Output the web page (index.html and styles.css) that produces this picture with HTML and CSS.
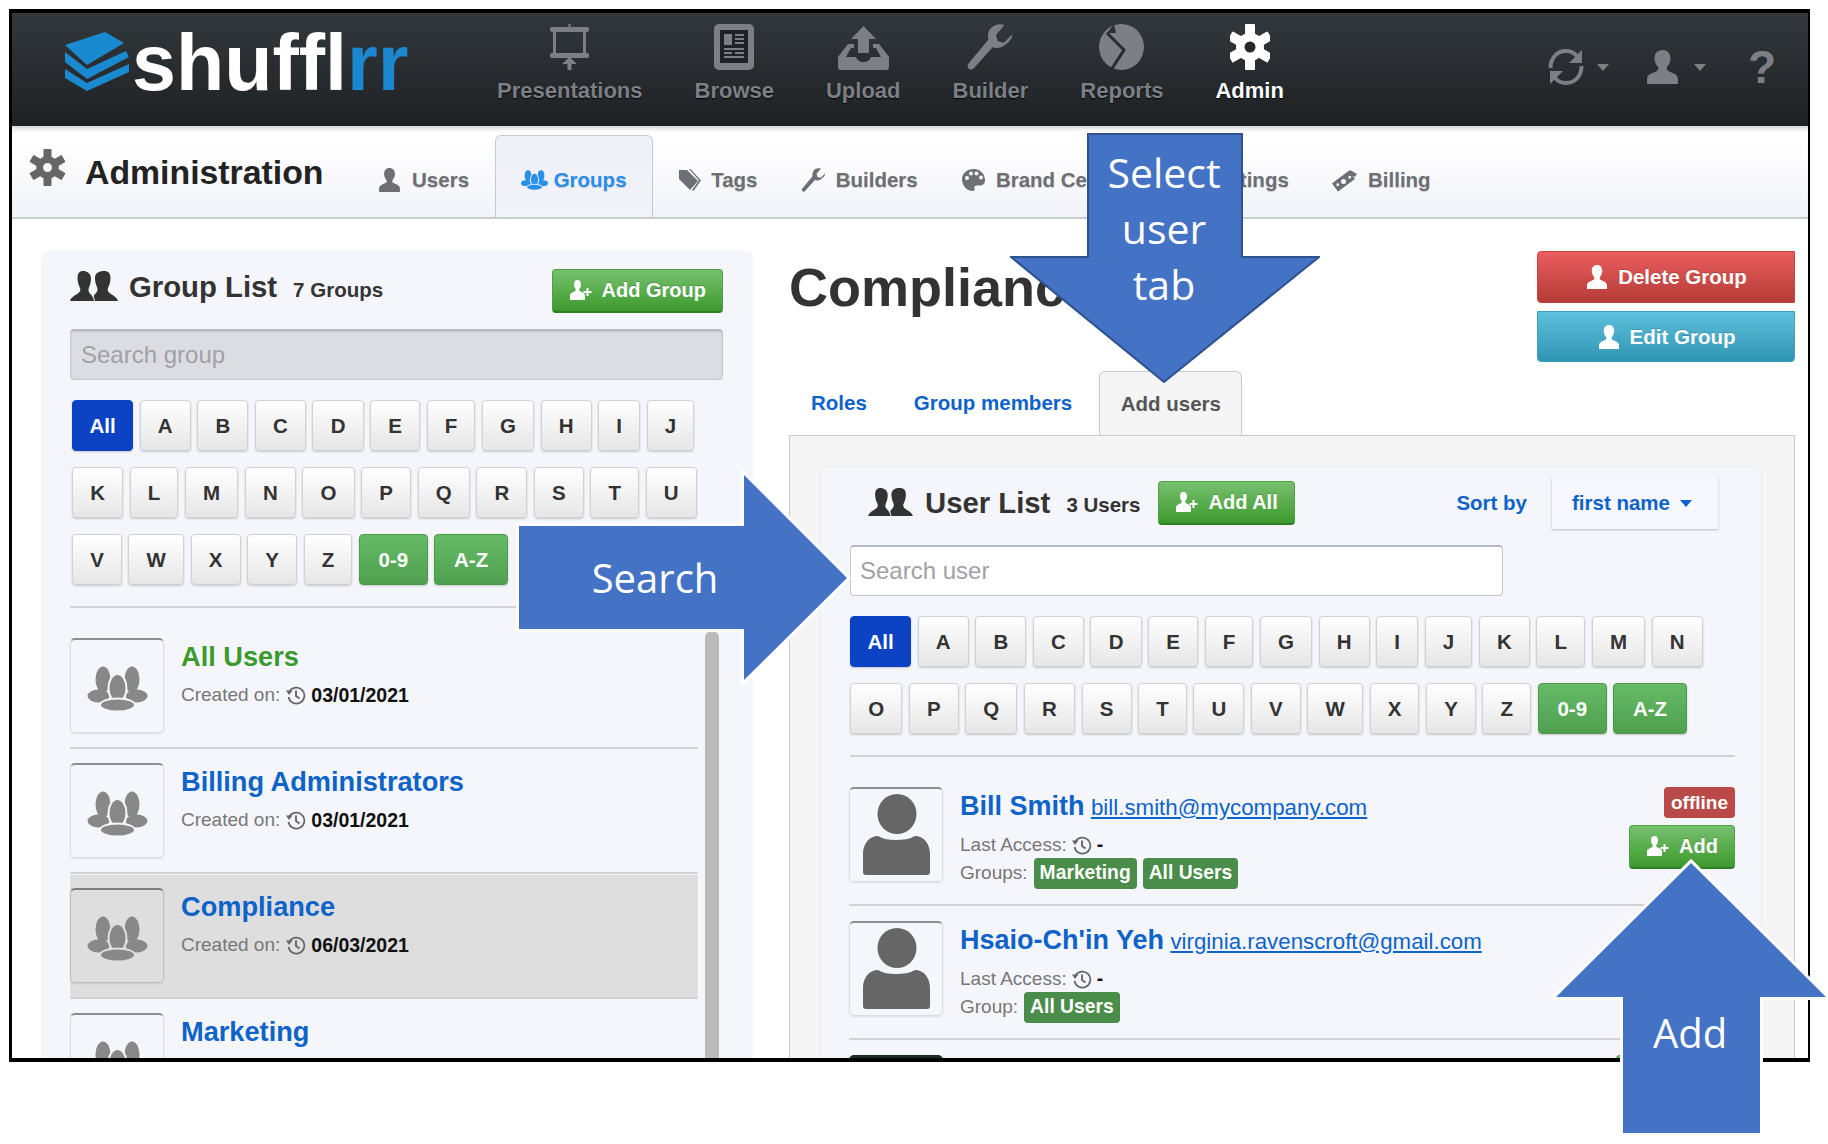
FILE: index.html
```html
<!DOCTYPE html>
<html lang="en">
<head>
  <meta charset="UTF-8">
  <meta name="viewport" content="width=device-width, initial-scale=1.0">
  <title>Shufflrr Administration</title>
  <link rel="stylesheet" href="styles.css">
</head>
<body>
  <!-- icon set -->
  <svg class="sprite" xmlns="http://www.w3.org/2000/svg">
    <symbol id="i-user" viewBox="0 0 24 24" preserveAspectRatio="none"><path d="M12 0C8.600 0 6.800 2.600 6.800 6c0 2.400 1 4.400 2.200 5.900.6.900.4 2.100-.5 2.800C6.300 16.200 2 16.900 2 20.200V24h20v-3.800c0-3.300-4.300-4-6.500-5.500-.9-.7-1.100-1.900-.5-2.800 1.200-1.500 2.200-3.500 2.200-5.900C17.200 2.600 15.400 0 12 0z"/></symbol>
    <symbol id="i-pair" viewBox="0 0 48 30"><path d="M13 0C9.500 0 7.500 2.500 7.500 7c0 4 1.300 7.500 2.500 10 .8 2 .2 3.500-1.500 5C6 24 1 26 0 30h24c-.3-3-2-5.500-4-7.500-1.500-1.500-2-3.500-1-6 1.200-2.500 2-5.500 2-9C21 2.500 17 0 13 0z"/><path d="M34 0c-5 0-9 2-9 7 0 3.500.8 6.500 2 9 1 2.500.5 4.500-1 6-1 1-1.800 2-2.300 3L25 30h23c-1-4-6-6-8.500-8-1.700-1.500-2.300-3-1.500-5 1.200-2.500 2.500-6 2.500-10 0-4.500-2-7-6.500-7z"/></symbol>
    <symbol id="i-users" viewBox="0 0 60 46"><ellipse cx="15.500" cy="13.500" rx="7.500" ry="13"/><ellipse cx="44.500" cy="13.500" rx="7.500" ry="13"/><ellipse cx="11" cy="30" rx="11" ry="6.500"/><ellipse cx="49" cy="30" rx="11" ry="6.500"/><ellipse class="front" cx="30" cy="22" rx="9" ry="14"/><ellipse class="front" cx="30" cy="39" rx="17.500" ry="6.500"/></symbol>
    <symbol id="i-add" viewBox="0 0 24 22"><path d="M8.500 0C6 0 5 2 5 4.800c0 1.700.7 3 1.500 4 .5.700.4 1.700-.3 2.200C4.500 12.200 1 12.800 1 15.500V20h15v-4.500c0-2.700-3.500-3.300-5.200-4.500-.7-.5-.8-1.500-.3-2.200.8-1 1.500-2.300 1.500-4C12 2 11 0 8.500 0z"/><path d="M17.500 8h2v3h3v2h-3v3h-2v-3h-3v-2h3z"/></symbol>
    <symbol id="i-gear" viewBox="0 0 40 46"><g><rect x="15" y="0" width="10" height="46" rx="1"/><rect x="15" y="0" width="10" height="46" rx="1" transform="rotate(60 20 23)"/><rect x="15" y="0" width="10" height="46" rx="1" transform="rotate(-60 20 23)"/></g><circle cx="20" cy="23" r="14"/><circle class="hole" cx="20" cy="23" r="5.500"/></symbol>
    <symbol id="i-wrench" viewBox="0 0 24 24"><path d="M23.500 5.500l-4.300 4.300-3.200-.9-.9-3.200L19.500.5c-2.800-.9-5.700 0-7.300 2-1.300 1.600-1.600 3.600-1 5.600L1 20.300c-.9 1-.9 2.300 0 3 .9.700 2 .5 2.800-.5l9.600-10.700c2.100.8 4.600.4 6.400-1.100 2.300-1.800 4.100-3.800 3.700-5.500z"/></symbol>
    <symbol id="i-tags" viewBox="0 0 24 24"><path d="M2 2h8l11 11-8 9L2 11z"/><path class="cut" d="M12 1h1.500L24 12.500 16.500 23 15 22l7-9.500z"/></symbol>
    <symbol id="i-palette" viewBox="0 0 24 24"><path d="M12 1C5.500 1 .5 5.500.5 11.500S5.500 23 11 23c2 0 2.500-1.200 2-2.500-.6-1.500.2-3 2-3h3.500c3 0 5-2.200 5-5C23.500 5.500 18.500 1 12 1zM5.500 12a2 2 0 1 1 0-4 2 2 0 0 1 0 4zm4-4.500a2 2 0 1 1 0-4 2 2 0 0 1 0 4zm5.500 0a2 2 0 1 1 0-4 2 2 0 0 1 0 4zm4.500 4a2 2 0 1 1 0-4 2 2 0 0 1 0 4z" fill-rule="evenodd"/></symbol>
    <symbol id="i-billing" viewBox="0 0 26 24"><path d="M1 15L18 2l7 4-2 3-1.500-1L5 21l3 1-2 1z"/><path d="M0 15.500L17 3l6 8L6 23.500z"/><circle class="hole" cx="11.500" cy="13.500" r="2.500"/><rect class="hole" x="4.500" y="15.500" width="2.500" height="2.500"/><rect class="hole" x="16.500" y="8" width="2.500" height="2.500"/></symbol>
    <symbol id="i-history" viewBox="0 0 20 20"><path d="M3.500 6.500A8 8 0 1 1 2.500 12" fill="none" stroke="currentColor" stroke-width="1.700"/><path d="M0 5.500h6.500L3 10z"/><path d="M10 5.500V11l3.500 2.500" fill="none" stroke="currentColor" stroke-width="1.900"/></symbol>
  </svg>

  <div class="page">
    <div class="frame">
      <header class="topbar">
        <div class="logo">
          <svg class="logo-mark" viewBox="0 0 65 59"><path d="M1 13L41 0l19 11-37 22z"/><path d="M1 20l22 17 39-18 3 6-42 22L1 30z"/><path d="M1 37l22 14 42-19v8L23 59 1 46z"/></svg>
          <span class="logo-text">shuffl<span class="logo-rr">rr</span></span>
        </div>
        <nav class="mainnav">
          <a class="nav-item">
            <svg class="nav-icon" width="39" height="46" viewBox="0 0 39 46"><rect x="18.500" width="2" height="4"/><rect x="0" y="3" width="39" height="5" rx="2"/><rect x="4.500" y="6" width="30" height="25" fill="none" stroke="currentColor" stroke-width="3"/><rect x="0" y="29" width="39" height="5" rx="2"/><path d="M19.500 33l-7.500 7h5.500v6h4v-6H27z"/></svg>
            <span>Presentations</span>
          </a>
          <a class="nav-item">
            <svg class="nav-icon" width="40" height="46" viewBox="0 0 40 46"><rect width="40" height="46" rx="5"/><rect class="nav-dark" x="6" y="6" width="28" height="33"/><path d="M10 10h8v11h-8zM21 10h9v2h-9zM21 14h9v2h-9zM21 18h9v2h-9zM10 24h20v2H10zM10 28h8v2h-8zM21 28h9v2h-9zM10 32h20v2H10z"/></svg>
            <span>Browse</span>
          </a>
          <a class="nav-item">
            <svg class="nav-icon" width="51" height="46" viewBox="0 0 51 46"><path d="M25.500 2L38 15h-7v14H20V15h-7z"/><path d="M10 20h6v4h-3l-5 9h10c1 3 4 5 7.500 5s6.500-2 7.500-5h10l-5-9h-3v-4h6l10 13v10a3 3 0 0 1-3 3H3a3 3 0 0 1-3-3V33z"/></svg>
            <span>Upload</span>
          </a>
          <a class="nav-item">
            <svg class="nav-icon" width="46" height="46"><use href="#i-wrench"/></svg>
            <span>Builder</span>
          </a>
          <a class="nav-item">
            <svg class="nav-icon" width="45" height="46" viewBox="0 0 45 46"><ellipse cx="22.500" cy="23" rx="22.500" ry="23"/><path d="M8 9l17 17L12 46" fill="none" class="pie-cut" stroke-width="3"/><path d="M15 0l2 9-9 0z" class="pie-notch"/></svg>
            <span>Reports</span>
          </a>
          <a class="nav-item nav-active">
            <svg class="nav-icon" width="40" height="46"><use href="#i-gear"/></svg>
            <span>Admin</span>
          </a>
        </nav>
        <div class="tools">
          <svg class="tool-icon" width="36" height="38" viewBox="0 0 36 38"><path d="M2.500 20C2.500 10 9 3 18 3c4.500 0 8 1.500 11 5M33.500 18c0 10-6.500 17-15.500 17-4.500 0-8-1.500-11-5" fill="none" stroke="currentColor" stroke-width="4"/><path d="M34 2v13H21zM2 36V23h13z"/></svg>
          <span class="tool-caret"></span>
          <svg class="tool-icon tool-user" width="37" height="34"><use href="#i-user"/></svg>
          <span class="tool-caret"></span>
          <span class="tool-help">?</span>
        </div>
      </header>

      <div class="subbar">
        <svg class="sub-gear" width="37" height="37"><use href="#i-gear"/></svg>
        <h2 class="sub-title">Administration</h2>
        <ul class="subnav">
          <li class="sub-item"><svg class="sub-icon" width="25" height="24"><use href="#i-user"/></svg>Users</li>
          <li class="sub-item sub-active"><svg class="sub-icon" width="27" height="24"><use href="#i-users"/></svg>Groups</li>
          <li class="sub-item"><svg class="sub-icon" width="24" height="24"><use href="#i-tags"/></svg>Tags</li>
          <li class="sub-item"><svg class="sub-icon" width="25" height="24"><use href="#i-wrench"/></svg>Builders</li>
          <li class="sub-item"><svg class="sub-icon" width="25" height="24"><use href="#i-palette"/></svg>Brand Center</li>
          <li class="sub-item"><svg class="sub-icon" width="29" height="24"><use href="#i-gear"/></svg>Settings</li>
          <li class="sub-item"><svg class="sub-icon" width="26" height="24"><use href="#i-billing"/></svg>Billing</li>
        </ul>
      </div>

      <main class="content">
        <section class="group-panel">
          <div class="panel-head">
            <svg class="pair-icon" width="48" height="30"><use href="#i-pair"/></svg>
            <h3 class="panel-title">Group List</h3>
            <span class="panel-count">7 Groups</span>
            <button class="btn btn-green btn-push"><svg width="24" height="22"><use href="#i-add"/></svg>Add Group</button>
          </div>
          <input class="search search-off" type="text" placeholder="Search group">
          <div class="alpha alpha-left">
            <a class="key key-on">All</a><a class="key">A</a><a class="key">B</a><a class="key">C</a><a class="key">D</a><a class="key">E</a><a class="key">F</a><a class="key">G</a><a class="key">H</a><a class="key">I</a><a class="key">J</a><a class="key">K</a><a class="key">L</a><a class="key">M</a><a class="key">N</a><a class="key">O</a><a class="key">P</a><a class="key">Q</a><a class="key">R</a><a class="key">S</a><a class="key">T</a><a class="key">U</a><a class="key">V</a><a class="key">W</a><a class="key">X</a><a class="key">Y</a><a class="key">Z</a><a class="key key-green">0-9</a><a class="key key-green">A-Z</a>
          </div>
          <hr class="rule">
          <div class="list-wrap">
            <ul class="group-list">
              <li class="group-row">
                <div class="thumb"><svg class="thumb-users" width="61" height="46"><use href="#i-users"/></svg></div>
                <div class="group-info">
                  <a class="group-name name-green">All Users</a>
                  <div class="meta">Created on: <svg class="clock" width="20" height="20"><use href="#i-history"/></svg> <b>03/01/2021</b></div>
                </div>
              </li>
              <li class="group-row">
                <div class="thumb"><svg class="thumb-users" width="61" height="46"><use href="#i-users"/></svg></div>
                <div class="group-info">
                  <a class="group-name">Billing Administrators</a>
                  <div class="meta">Created on: <svg class="clock" width="20" height="20"><use href="#i-history"/></svg> <b>03/01/2021</b></div>
                </div>
              </li>
              <li class="group-row group-selected">
                <div class="thumb"><svg class="thumb-users" width="61" height="46"><use href="#i-users"/></svg></div>
                <div class="group-info">
                  <a class="group-name">Compliance</a>
                  <div class="meta">Created on: <svg class="clock" width="20" height="20"><use href="#i-history"/></svg> <b>06/03/2021</b></div>
                </div>
              </li>
              <li class="group-row">
                <div class="thumb"><svg class="thumb-users" width="61" height="46"><use href="#i-users"/></svg></div>
                <div class="group-info">
                  <a class="group-name">Marketing</a>
                </div>
              </li>
            </ul>
            <div class="scrollbar"></div>
          </div>
        </section>

        <section class="detail">
          <div class="detail-head">
            <h1 class="detail-title">Compliance</h1>
            <div class="detail-actions">
              <button class="btn btn-wide btn-red"><svg width="24" height="24"><use href="#i-user"/></svg>Delete Group</button>
              <button class="btn btn-wide btn-blue"><svg width="24" height="24"><use href="#i-user"/></svg>Edit Group</button>
            </div>
          </div>
          <div class="tabs">
            <a class="tab">Roles</a>
            <a class="tab">Group members</a>
            <a class="tab tab-active">Add users</a>
          </div>
          <div class="pane">
            <div class="user-panel">
              <div class="user-head">
                <svg class="pair-icon" width="47" height="28"><use href="#i-pair"/></svg>
                <h3 class="panel-title">User List</h3>
                <span class="panel-count">3 Users</span>
                <button class="btn btn-green"><svg width="24" height="22"><use href="#i-add"/></svg>Add All</button>
                <span class="sort-label">Sort by</span>
                <div class="sort-box">first name<span class="sort-caret"></span></div>
              </div>
              <input class="search search-user" type="text" placeholder="Search user">
              <div class="alpha alpha-users">
                <a class="key key-on">All</a><a class="key">A</a><a class="key">B</a><a class="key">C</a><a class="key">D</a><a class="key">E</a><a class="key">F</a><a class="key">G</a><a class="key">H</a><a class="key">I</a><a class="key">J</a><a class="key">K</a><a class="key">L</a><a class="key">M</a><a class="key">N</a><a class="key">O</a><a class="key">P</a><a class="key">Q</a><a class="key">R</a><a class="key">S</a><a class="key">T</a><a class="key">U</a><a class="key">V</a><a class="key">W</a><a class="key">X</a><a class="key">Y</a><a class="key">Z</a><a class="key key-green">0-9</a><a class="key key-green">A-Z</a>
              </div>
              <hr class="rule">
              <ul class="user-list">
                <li class="user-row">
                  <div class="thumb thumb-person"><svg width="67" height="81" viewBox="0 0 67 81"><ellipse cx="34" cy="20" rx="19.500" ry="20"/><path d="M0 78V60c0-10 6-18 15-18 5 3 11 4 18 4s14-1 19-4c9 0 15 8 15 18v18c0 2-1 3-3 3H3c-2 0-3-1-3-3z"/></svg></div>
                  <div class="user-info">
                    <div class="user-line"><a class="user-name">Bill Smith</a> <a class="user-mail">bill.smith@mycompany.com</a></div>
                    <div class="user-access">Last Access: <svg class="clock" width="20" height="20"><use href="#i-history"/></svg> <b>-</b></div>
                    <div class="user-groups">Groups: <span class="tag">Marketing</span><span class="tag">All Users</span></div>
                  </div>
                  <div class="user-side">
                    <span class="status">offline</span>
                    <button class="btn btn-green"><svg width="24" height="22"><use href="#i-add"/></svg>Add</button>
                  </div>
                </li>
                <li class="user-row">
                  <div class="thumb thumb-person"><svg width="67" height="81" viewBox="0 0 67 81"><ellipse cx="34" cy="20" rx="19.500" ry="20"/><path d="M0 78V60c0-10 6-18 15-18 5 3 11 4 18 4s14-1 19-4c9 0 15 8 15 18v18c0 2-1 3-3 3H3c-2 0-3-1-3-3z"/></svg></div>
                  <div class="user-info">
                    <div class="user-line"><a class="user-name">Hsaio-Ch'in Yeh</a> <a class="user-mail">virginia.ravenscroft@gmail.com</a></div>
                    <div class="user-access">Last Access: <svg class="clock" width="20" height="20"><use href="#i-history"/></svg> <b>-</b></div>
                    <div class="user-groups">Group: <span class="tag">All Users</span></div>
                  </div>
                  <div class="user-side">
                    <span class="status">offline</span>
                    <button class="btn btn-green"><svg width="24" height="22"><use href="#i-add"/></svg>Add</button>
                  </div>
                </li>
                <li class="user-row">
                  <div class="thumb thumb-photo"></div>
                  <div class="user-side">
                    <button class="btn btn-green btn-long"></button>
                  </div>
                </li>
              </ul>
            </div>
          </div>
        </section>
      </main>
    </div>

    <!-- slide annotations on top of the screenshot -->
    <div class="callout callout-tab">
      <svg width="310" height="250" viewBox="0 0 310 250"><polygon points="78,1 232,1 232,124 309,124 154,249 1,124 78,124"/></svg>
      <span class="callout-text">Select<br>user<br>tab</span>
    </div>
    <div class="callout callout-search">
      <svg width="336" height="215" viewBox="0 0 336 215"><polygon points="4,56 229,56 229,5 332,108 229,210 229,159 4,159"/></svg>
      <span class="callout-text">Search</span>
    </div>
    <div class="callout callout-add">
      <svg width="276" height="278" viewBox="0 0 276 278"><polygon points="139,4 274,138 208,138 208,274 71,274 71,138 4,138"/></svg>
      <span class="callout-text">Add</span>
    </div>
  </div>
</body>
</html>
```

FILE: styles.css
```css
* {
  box-sizing: border-box;
}

html, body {
  margin: 0;
  padding: 0;
  overflow: hidden;
  background: #fff;
}

body {
  font-family: "Liberation Sans", Arial, sans-serif;
  color: #333;
}

.sprite {
  display: none;
}

a {
  cursor: pointer;
}

svg {
  fill: currentColor;
  flex-shrink: 0;
}

.page {
  position: relative;
  width: 1828px;
  height: 1144px;
  padding: 9px 0 0 9px;
  overflow: hidden;
}

.frame {
  width: 1801px;
  height: 1053px;
  border-style: solid;
  border-color: #000;
  border-width: 4px 2px 4px 3px;
  display: flex;
  flex-direction: column;
  overflow: hidden;
  background: #fff;
}

/* top bar */
.topbar {
  flex: 0 0 113px;
  display: flex;
  align-items: flex-start;
  padding: 11px 37px 0 52px;
  background: linear-gradient(#33383c, #1e2124);
}

.logo {
  width: 343px;
  margin-top: 8px;
  display: flex;
  align-items: flex-start;
  gap: 3px;
  color: #1a8ad0;
}

.logo-mark {
  width: 65px;
  height: 59px;
}

.logo-text {
  margin-top: 1px;
  font-weight: 700;
  font-size: 79px;
  line-height: 60px;
  color: #fff;
}

.logo-rr {
  color: #1a87cf;
}

.mainnav {
  display: flex;
  margin-left: 64px;
}

.nav-item {
  display: flex;
  flex-direction: column;
  align-items: center;
  gap: 8px;
  padding: 0 26px;
  color: #7c8086;
  font-size: 22px;
  font-weight: 700;
  line-height: 26px;
  text-shadow: 0 1px 1px #000;
}

.nav-icon {
  height: 46px;
  color: #7c8086;
}

.nav-dark {
  fill: #202326;
}

.pie-cut {
  stroke: #282b2f;
}

.pie-notch {
  fill: #2d3135;
}

.nav-active, .nav-active .nav-icon {
  color: #fff;
}

.hole {
  fill: var(--hole, #25282b);
}

.tools {
  margin-left: auto;
  margin-top: 24px;
  display: flex;
  align-items: center;
  color: #7c8086;
}

.tool-caret {
  width: 0;
  height: 0;
  margin: 0 35px 0 13px;
  border-left: 6px solid transparent;
  border-right: 6px solid transparent;
  border-top: 7px solid #7c8086;
}

.tool-user + .tool-caret {
  margin-right: 42px;
}

.tool-help {
  width: 23px;
  font-size: 46px;
  font-weight: 700;
  line-height: 37px;
}

/* administration bar */
.subbar {
  flex: 0 0 91px;
  display: flex;
  padding-left: 17px;
  background: linear-gradient(#fff 20%, #f2f3f9);
  border-bottom: 2px solid #c9cbd3;
  box-shadow: inset 0 6px 6px -5px rgba(0, 0, 0, .25);
  --hole: #f8f8fc;
}

.sub-gear {
  margin-top: 23px;
  color: #666;
}

.sub-title {
  margin: 26px 0 0 19px;
  font-size: 33.800px;
  line-height: 40px;
  color: #222;
}

.subnav {
  display: flex;
  list-style: none;
  margin: 9px 0 0 32px;
  padding: 0;
}

.sub-item {
  display: flex;
  align-items: center;
  gap: 10px;
  padding: 7px 21.600px 0;
  font-size: 20.500px;
  font-weight: 700;
  color: #6d6f73;
  text-shadow: 0 1px 1px rgba(0, 0, 0, .18);
}

.sub-icon {
  color: #6d6f73;
}

.sub-active {
  margin: 0 3px 0 4px;
  padding: 7px 25px 0;
  gap: 6px;
  height: 82px;
  color: #2a8fe8;
  background: linear-gradient(#eef0f7, #f3f4fa);
  border: 1px solid #c5c8d5;
  border-bottom: 0;
  border-radius: 6px 6px 0 0;
}

.sub-active .sub-icon {
  color: #2a8fe8;
  --thumb-bg: #f1f2f9;
}

/* main area */
.content {
  flex: 1;
  min-height: 0;
  display: flex;
  gap: 37px;
  padding: 0 13px 0 30px;
  overflow: hidden;
}

.group-panel {
  flex: 0 0 710px;
  margin-top: 33px;
  padding: 17px 29px 0 28px;
  background: #f5f6fb;
  border-radius: 6px 6px 0 0;
  box-shadow: 0 0 2px rgba(0, 0, 0, .12);
  overflow: hidden;
}

.panel-head {
  display: flex;
  align-items: center;
}

.panel-title {
  margin: -8px 0 0 11px;
  font-size: 29.300px;
  line-height: 44px;
  color: #333;
}

.panel-count {
  margin: -2px 0 0 16px;
  font-size: 20.500px;
  font-weight: 700;
  color: #333;
}

.pair-icon {
  margin-top: -10px;
  color: #333;
}

/* buttons */
.btn {
  display: inline-flex;
  align-items: center;
  justify-content: center;
  gap: 9px;
  height: 44px;
  padding: 0 16px;
  border: 1px solid transparent;
  border-radius: 4px;
  font-family: inherit;
  font-size: 20px;
  font-weight: 700;
  color: #fff;
  text-shadow: 0 -1px 0 rgba(0, 0, 0, .2);
}

.btn svg {
  color: #fff;
}

.btn-green {
  background: linear-gradient(#77c070, #3d9a2c);
  border-color: #4fa044 #4fa044 #2f7d25;
  border-bottom-width: 2px;
}

.btn-push {
  margin-left: auto;
}

.btn-long {
  width: 119px;
}

.btn-wide {
  width: 258px;
  height: 52px;
  font-size: 20.500px;
  border-radius: 4px 0 0 4px;
}

.btn-red {
  background: linear-gradient(#ea5e5e, #b43b37);
  border-color: #c9423f;
}

.btn-blue {
  height: 51px;
  border-radius: 0 0 4px 4px;
  background: linear-gradient(#5ec2de, #2f93b2);
  border-color: #3d9fbd;
}

/* search boxes */
.search {
  display: block;
  height: 51px;
  margin-top: 16px;
  padding: 0 9px;
  border: 1px solid #c3c6d0;
  border-top: 2px solid #b6b9c4;
  border-radius: 4px;
  font-family: inherit;
  font-size: 24px;
  background: #fff;
}

.search::placeholder {
  color: #9fa1a6;
}

.search-off {
  width: 653px;
  padding-left: 10px;
  background: #dcdde2;
  box-shadow: inset 0 1px 2px rgba(0, 0, 0, .1);
}

.search-user {
  width: 653px;
  margin-top: 16px;
}

/* alphabet filter */
.alpha {
  display: flex;
  flex-wrap: wrap;
  gap: 16px 6.500px;
  margin-top: 20px;
}

.alpha-left {
  margin-left: 2px;
}

.key {
  height: 51px;
  padding: 0 17.150px;
  display: flex;
  align-items: center;
  border: 1px solid #d2d2d2;
  border-radius: 4px;
  background: linear-gradient(#fff, #e6e6e6);
  box-shadow: 0 1px 2px rgba(0, 0, 0, .2);
  font-size: 20.500px;
  font-weight: 700;
  color: #333;
}

.key-on {
  padding: 0 16.500px;
  background: #0b43c4;
  border-color: #0b43c4;
  color: #fff;
}

.key-green {
  padding: 0 18.700px;
  background: linear-gradient(#66bb66, #4f9f4f);
  border-color: #4b994b;
  color: #fff;
}

.rule {
  margin: 21px 0 0;
  border: 0;
  border-top: 2px solid #d0d2d8;
}

/* group list */
.list-wrap {
  display: flex;
  gap: 7px;
  margin-top: 17px;
}

.group-list {
  flex: 0 0 628px;
  list-style: none;
  margin: 0;
  padding: 0;
}

.group-row {
  display: flex;
  gap: 17px;
  height: 124px;
  margin-bottom: 1px;
  padding-top: 13px;
  border-bottom: 2px solid #d0d2d8;
}

.group-selected {
  background: #dedede;
  --thumb-bg: #dedede;
}

.thumb {
  flex: 0 0 94px;
  height: 95px;
  display: flex;
  align-items: center;
  justify-content: center;
  border: 1px solid #dcdde2;
  border-top: 2px solid #8e8f92;
  border-radius: 5px;
  box-shadow: 0 1px 2px rgba(0, 0, 0, .1);
}

.thumb-users {
  color: #888;
  margin-top: 6px;
}

.front {
  stroke: var(--thumb-bg, #f5f6fb);
  stroke-width: 2;
}

.group-selected .thumb {
  border-color: #bdbdbd;
  border-top-color: #7e7e7e;
}

.group-info {
  padding-top: 3px;
}

.group-name {
  display: block;
  font-size: 27.200px;
  font-weight: 700;
  line-height: 32px;
  color: #0e63c9;
}

.name-green {
  color: #3a9a2e;
}

.meta {
  display: flex;
  align-items: center;
  gap: 5.500px;
  margin-top: 7px;
  font-size: 19px;
  line-height: 30px;
  color: #777;
}

.meta b, .user-access b {
  font-size: 19.500px;
  color: #111;
}

.clock {
  color: #666;
}

.scrollbar {
  flex: 0 0 14px;
  margin-top: 7px;
  border-radius: 5px 5px 0 0;
  background: #bbb;
}

/* right column */
.detail {
  flex: 1;
  min-width: 0;
  display: flex;
  flex-direction: column;
}

.detail-head {
  flex: 0 0 120px;
  margin-top: 32px;
  display: flex;
  justify-content: space-between;
}

.detail-title {
  margin: 6px 0 0 0;
  font-size: 54px;
  line-height: 60px;
  color: #333;
}

.detail-actions {
  display: flex;
  flex-direction: column;
  gap: 8px;
}

.tabs {
  flex: 0 0 63px;
  display: flex;
  gap: 3px;
}

.tab {
  padding: 0 22px;
  display: flex;
  align-items: center;
  font-size: 20.500px;
  font-weight: 700;
  color: #0e63c9;
}

.tab-active {
  margin-left: 2px;
  padding: 0 20.500px;
  color: #555;
  background: #f5f5f5;
  border: 1px solid #c5c8d5;
  border-bottom: 0;
  border-radius: 6px 6px 0 0;
  height: 64px;
  position: relative;
}

.pane {
  flex: 1;
  min-height: 0;
  padding: 31px 33px 0 31px;
  background: #f5f5f5;
  border: 1px solid #c5c8d5;
  border-bottom: 0;
  overflow: hidden;
}

.user-panel {
  height: 100%;
  padding: 10px 26px 0 29px;
  background: #f5f6fb;
  border-radius: 6px 6px 0 0;
  box-shadow: 0 0 2px rgba(0, 0, 0, .12);
}

.user-head {
  display: flex;
  align-items: center;
  padding-left: 17px;
  height: 52px;
}

.user-head .pair-icon {
  margin-top: -2px;
}

.user-head .panel-title {
  margin-top: 0;
}

.user-head .panel-count {
  margin-top: 4px;
  margin-right: 18px;
}

.sort-label {
  margin-left: auto;
  font-size: 20.500px;
  font-weight: 700;
  color: #0e63c9;
}

.sort-box {
  display: flex;
  align-items: center;
  gap: 10px;
  width: 166px;
  height: 52px;
  margin: 0 17px 0 25px;
  padding-left: 20px;
  background: #f6f7ff;
  box-shadow: 0 1px 2px rgba(0, 0, 0, .25);
  font-size: 20.500px;
  font-weight: 700;
  color: #0e63c9;
}

.sort-caret {
  width: 0;
  height: 0;
  border-left: 6.500px solid transparent;
  border-right: 6.500px solid transparent;
  border-top: 7px solid #0e63c9;
}

/* users */
.user-list {
  list-style: none;
  margin: 0 0 0 -1px;
  padding: 30px 0 0;
}

.user-row {
  display: flex;
  gap: 17px;
  padding-bottom: 16px;
  margin-bottom: 15px;
  border-bottom: 2px solid #d0d2d8;
}

.thumb-person {
  color: #666;
  align-items: flex-end;
  padding-bottom: 6px;
}

.thumb-photo {
  background: #1c2a22;
  border-color: #1c2a22;
}

.user-info {
  height: 101px;
  padding-top: 2.500px;
}

.user-line {
  height: 32px;
  line-height: 32px;
}

.user-name {
  font-size: 27px;
  font-weight: 700;
  color: #0e63c9;
}

.user-mail {
  margin-left: 2px;
  font-size: 22.300px;
  color: #0e63c9;
  text-decoration: underline;
}

.user-access {
  display: flex;
  align-items: center;
  gap: 5px;
  height: 24px;
  margin-top: 11px;
  font-size: 19px;
  color: #777;
}

.user-groups {
  display: flex;
  align-items: center;
  gap: 6px;
  height: 31px;
  margin-top: 1px;
  font-size: 19px;
  color: #777;
}

.tag {
  height: 31px;
  padding: 0 6px;
  display: flex;
  align-items: center;
  border-radius: 4px;
  background: #4a8c4a;
  font-size: 19.300px;
  font-weight: 700;
  color: #fff;
}

.user-side {
  margin-left: auto;
  display: flex;
  flex-direction: column;
  align-items: flex-end;
  gap: 7px;
}

.status {
  height: 31px;
  padding: 0 7px;
  display: flex;
  align-items: center;
  border-radius: 4px;
  background: #b94a48;
  font-size: 19px;
  font-weight: 700;
  color: #fff;
}

/* annotations */
.callout {
  position: absolute;
  z-index: 2;
}

.callout svg {
  display: block;
}

.callout polygon {
  fill: #4472c4;
  stroke: #fff;
  stroke-width: 6;
  paint-order: stroke;
}

.callout-text {
  position: absolute;
  left: 0;
  width: 100%;
  font-family: "Open Sans", sans-serif;
  font-size: 40px;
  line-height: 56px;
  text-align: center;
  color: #fff;
}

.callout-tab {
  left: 1010px;
  top: 133px;
}

.callout-tab polygon {
  stroke: #2f528f;
  stroke-width: 2;
  paint-order: normal;
}

.callout-tab .callout-text {
  top: 11px;
  left: -1px;
  font-size: 41px;
}

.callout-search {
  left: 515px;
  top: 470px;
}

.callout-search .callout-text {
  left: 15px;
  top: 80px;
  width: 250px;
}

.callout-add {
  left: 1552px;
  top: 859px;
}

.callout-add .callout-text {
  top: 146px;
}
```
